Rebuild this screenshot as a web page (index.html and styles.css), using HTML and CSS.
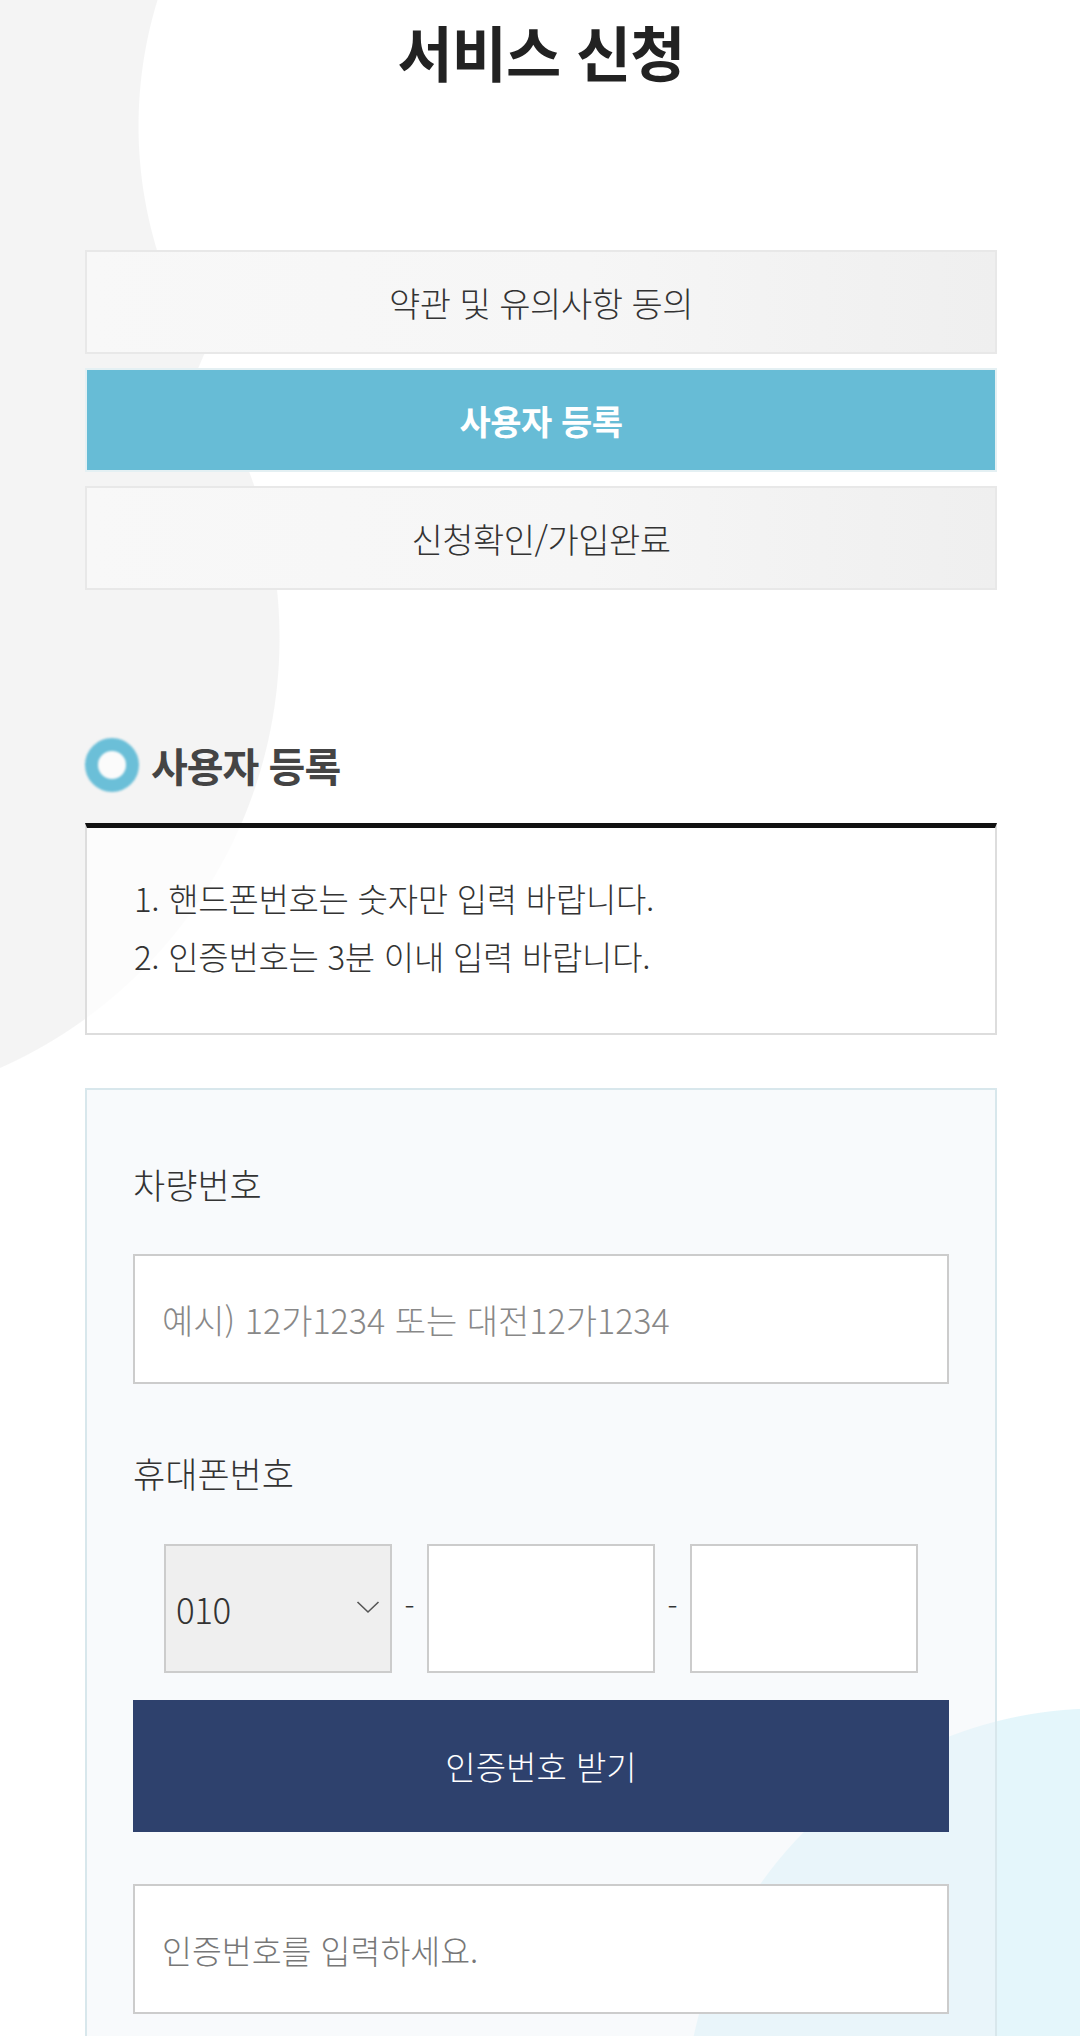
FILE: index.html
```html
<!DOCTYPE html>
<html lang="ko">
<head>
<meta charset="utf-8">
<title>서비스 신청</title>
<link rel="stylesheet" href="styles.css">
</head>
<body>
<div class="page">
  <header class="page-head">
    <h1 class="title">서비스 신청</h1>
  </header>

  <nav class="steps">
    <div class="step">약관 및 유의사항 동의</div>
    <div class="step active">사용자 등록</div>
    <div class="step">신청확인/가입완료</div>
  </nav>

  <section class="reg">
    <h2 class="sec-title"><span class="ring"></span><span>사용자 등록</span></h2>

    <div class="notice">
      <p>1. 핸드폰번호는 숫자만 입력 바랍니다.</p>
      <p>2. 인증번호는 3분 이내 입력 바랍니다.</p>
    </div>

    <form class="form">
      <label class="label" for="car">차량번호</label>
      <input class="field" id="car" type="text" placeholder="예시) 12가1234 또는 대전12가1234">

      <label class="label label-phone" for="p2">휴대폰번호</label>
      <div class="phone">
        <div class="select-box">
          <span class="select-val">010</span>
          <svg class="chev" width="24" height="14" viewBox="0 0 24 14"><polyline points="1.5,2 12,12 22.5,2" fill="none" stroke="#555" stroke-width="1.6"/></svg>
        </div>
        <span class="dash">-</span>
        <input class="phone-in" id="p2" type="text">
        <span class="dash">-</span>
        <input class="phone-in" type="text">
      </div>

      <button class="btn" type="button">인증번호 받기</button>

      <input class="field field-code" type="text" placeholder="인증번호를 입력하세요.">
    </form>
  </section>
</div>
</body>
</html>
```

FILE: styles.css
```css
* {
  box-sizing: border-box;
}

html, body {
  margin: 0;
  padding: 0;
}

body {
  font-family: "Noto Sans CJK KR", "Noto Sans", sans-serif;
  font-weight: 300;
  color: #333;
}

.page {
  width: 1080px;
  min-height: 2036px;
  overflow: hidden;
  padding: 0 83px 0 85px;
  background:
    radial-gradient(circle at 565px 126px, #ffffff 426px, rgba(255,255,255,0) 427px),
    radial-gradient(circle at -400px 100px, #f4f4f4 655px, rgba(244,244,244,0) 656px),
    radial-gradient(circle at -191px 638px, #f4f4f4 470px, rgba(244,244,244,0) 471px),
    radial-gradient(circle at 1099px 2123px, #e4f6fb 414px, rgba(228,246,251,0) 415px),
    #ffffff;
}

/* title */
.page-head {
  padding-top: 14px;
  text-align: center;
}

.title {
  margin: 0;
  font-size: 60px;
  line-height: 74px;
  font-weight: 700;
  letter-spacing: -1px;
  color: #222;
}

/* steps */
.steps {
  margin-top: 162px;
  display: flex;
  flex-direction: column;
  gap: 14px;
}

.step {
  height: 104px;
  display: flex;
  align-items: center;
  justify-content: center;
  border: 2px solid #e8e8e8;
  background: linear-gradient(to right, #f8f8f8 0%, #f6f6f6 55%, #efefef 100%);
  font-size: 34px;
  letter-spacing: -0.5px;
  color: #333;
}

.step.active {
  background: #67bcd6;
  border-color: #e4f0f3;
  color: #fff;
  font-weight: 700;
}

/* section */
.reg {
  margin-top: 147px;
}

.sec-title {
  margin: 0;
  height: 56px;
  display: flex;
  align-items: center;
  gap: 12px;
  font-size: 40px;
  font-weight: 700;
  letter-spacing: -1px;
  color: #444;
}

.ring {
  width: 54px;
  height: 54px;
  border-radius: 50%;
  border: 13px solid #6bbfd8;
  background: #fbfbfb;
  filter: blur(1px);
  flex: none;
}

.notice {
  margin-top: 30px;
  border: 2px solid #dddddd;
  border-top: 5px solid #111;
  background: rgba(255,255,255,0.75);
  padding: 41px 47px 48px;
}

.notice p {
  margin: 0;
  font-size: 33px;
  line-height: 58px;
  letter-spacing: -0.3px;
  color: #333;
}

/* form */
.form {
  margin-top: 53px;
  border: 2px solid #d8e7ec;
  background: rgba(240,244,248,0.45);
  padding: 70px 46px 60px;
  display: flex;
  flex-direction: column;
}

.label {
  font-size: 35px;
  line-height: 48px;
  color: #333;
}

.label-phone {
  margin-top: 65px;
}

.field {
  margin-top: 46px;
  height: 130px;
  width: 100%;
  border: 2px solid #cccccc;
  background: #fff;
  padding: 0 27px;
  font-family: inherit;
  font-weight: 300;
  font-size: 34px;
  color: #333;
  outline: none;
}

.field::placeholder {
  color: #888;
}

.field-code {
  margin-top: 52px;
  font-size: 32.5px;
}

.field-code::placeholder {
  color: #777;
}

.phone {
  margin: 47px auto 0;
  width: 754px;
  height: 129px;
  display: grid;
  grid-template-columns: 1fr 35px 1fr 35px 1fr;
  align-items: center;
}

.select-box {
  height: 100%;
  min-width: 0;
  border: 2px solid #cccccc;
  background: #efefef;
  display: flex;
  align-items: center;
  justify-content: space-between;
  padding: 0 10px 0 10px;
}

.select-val {
  font-size: 35px;
  font-weight: 300;
  color: #333;
  letter-spacing: -0.5px;
}

.chev {
  margin-top: -4px;
}

.dash {
  text-align: center;
  font-size: 30px;
  color: #333;
  margin-top: -8px;
}

.phone-in {
  min-width: 0;
  width: 100%;
  height: 100%;
  border: 2px solid #cccccc;
  background: #fff;
  outline: none;
}

.btn {
  margin-top: 27px;
  height: 132px;
  width: 100%;
  border: 0;
  background: #2e416d;
  color: #fff;
  font-family: inherit;
  font-weight: 300;
  font-size: 33px;
  cursor: pointer;
}
```
